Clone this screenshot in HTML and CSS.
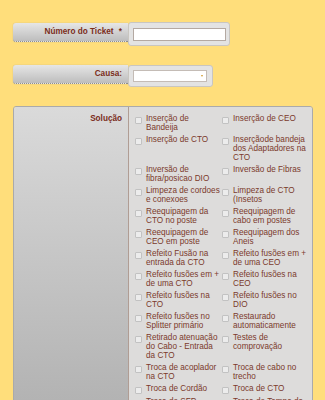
FILE: index.html
```html
<!DOCTYPE html>
<html lang="pt-br">

<head>
    <meta charset="UTF-8">
    <meta name="viewport" content="width=device-width, initial-scale=1.0">
    <title>Ticket</title>
    <link rel="stylesheet" href="styles.css">
</head>

<body>
    <div class="form">
        <div class="row rowTicket">
            <div class="label">Número do Ticket <span class="req">*</span></div>
            <div class="field fieldTicket">
                <div class="input"></div>
            </div>
        </div>
        <div class="row rowCausa">
            <div class="label">Causa:</div>
            <div class="field fieldCausa">
                <div class="select"><span class="arrow"></span></div>
            </div>
        </div>
        <div class="box">
            <div class="boxLabel">Solução</div>
            <div class="options">
                <div class="opt"><span class="check"></span><p>Inserção de Bandeija</p></div>
                <div class="opt"><span class="check"></span><p>Inserção de CEO</p></div>
                <div class="opt"><span class="check"></span><p>Inserção de CTO</p></div>
                <div class="opt"><span class="check"></span><p>Inserçãode bandeja dos Adaptadores na CTO</p></div>
                <div class="opt"><span class="check"></span><p>Inversão de fibra/posicao DIO</p></div>
                <div class="opt"><span class="check"></span><p>Inversão de Fibras</p></div>
                <div class="opt"><span class="check"></span><p>Limpeza de cordoes e conexoes</p></div>
                <div class="opt"><span class="check"></span><p>Limpeza de CTO (Insetos</p></div>
                <div class="opt"><span class="check"></span><p>Reequipagem da CTO no poste</p></div>
                <div class="opt"><span class="check"></span><p>Reequipagem de cabo em postes</p></div>
                <div class="opt"><span class="check"></span><p>Reequipagem de CEO em poste</p></div>
                <div class="opt"><span class="check"></span><p>Reequipagem dos Aneis</p></div>
                <div class="opt"><span class="check"></span><p>Refeito Fusão na entrada da CTO</p></div>
                <div class="opt"><span class="check"></span><p>Refeito fusões em + de uma CEO</p></div>
                <div class="opt"><span class="check"></span><p>Refeito fusões em + de uma CTO</p></div>
                <div class="opt"><span class="check"></span><p>Refeito fusões na CEO</p></div>
                <div class="opt"><span class="check"></span><p>Refeito fusões na CTO</p></div>
                <div class="opt"><span class="check"></span><p>Refeito fusões no DIO</p></div>
                <div class="opt"><span class="check"></span><p>Refeito fusões no Splitter primário</p></div>
                <div class="opt"><span class="check"></span><p>Restaurado automaticamente</p></div>
                <div class="opt"><span class="check"></span><p>Retirado atenuação do Cabo - Entrada da CTO</p></div>
                <div class="opt"><span class="check"></span><p>Testes de comprovação</p></div>
                <div class="opt"><span class="check"></span><p>Troca de acoplador na CTO</p></div>
                <div class="opt"><span class="check"></span><p>Troca de cabo no trecho</p></div>
                <div class="opt"><span class="check"></span><p>Troca de Cordão</p></div>
                <div class="opt"><span class="check"></span><p>Troca de CTO</p></div>
                <div class="opt"><span class="check"></span><p>Troca de SFP</p></div>
                <div class="opt"><span class="check"></span><p>Troca de Tampa da CTO</p></div>
            </div>
        </div>
    </div>
</body>

</html>
```

FILE: styles.css
```css
* {
    margin: 0;
    padding: 0;
    box-sizing: border-box;
}

body {
    background-color: #ffde7b;
    font-family: "Liberation Sans", Arial, sans-serif;
    overflow: hidden;
}

.form {
    padding: 22px 0 0 13px;
}

.row {
    display: flex;
    align-items: flex-start;
    margin-bottom: 19px;
}

.label {
    width: 115px;
    height: 19px;
    margin-top: 1px;
    padding-right: 6px;
    line-height: 18px;
    text-align: right;
    font-size: 8.2px;
    font-weight: bold;
    color: #7a2c1a;
    background: linear-gradient(#e6e6e6, #bdbdbd);
    border-radius: 3px 0 0 3px;
    border-bottom: 1px dotted #8f8f8f;
    box-shadow: 0 0 1px #a09a90;
}

.rowCausa .label {
    margin-top: 0;
}

.req {
    margin-left: 3px;
}

.field {
    background-color: #e3e3e3;
    border: 1px solid #c9c6c0;
    border-radius: 3px;
}

.fieldTicket {
    width: 102px;
    height: 24px;
    padding: 5px 0 0 4px;
}

.fieldCausa {
    width: 85px;
    height: 22px;
    padding: 4px 0 0 4px;
}

.input {
    width: 93px;
    height: 13px;
    background-color: #fff;
    border: 1px solid #b4a9a2;
}

.select {
    position: relative;
    width: 74px;
    height: 12px;
    background-color: #fff;
    border: 1px solid #c4bcb6;
}

.select .arrow {
    position: absolute;
    right: 3px;
    top: 4px;
    border-left: 1.5px solid transparent;
    border-right: 1.5px solid transparent;
    border-top: 2px solid #d29a2c;
}

.box {
    display: flex;
    width: 300px;
    height: 340px;
    border: 1px solid #aaa;
    border-radius: 3px 3px 0 0;
    overflow: hidden;
}

.boxLabel {
    width: 114px;
    padding: 7px 6px 0 0;
    text-align: right;
    font-size: 8.2px;
    font-weight: bold;
    color: #7a2c1a;
    background: linear-gradient(#dadada, #adadad);
}

.options {
    flex: 1;
    display: grid;
    grid-template-columns: 87px 1fr;
    row-gap: 3px;
    align-content: start;
    padding: 7px 0 0 6px;
    background-color: #dddcdb;
    border-left: 1px solid #b09d94;
}

.opt {
    display: flex;
    align-items: flex-start;
}

.opt p {
    font-size: 8.2px;
    line-height: 9px;
    color: #7b3a2b;
    padding-right: 2px;
}

.check {
    flex: none;
    width: 7px;
    height: 7px;
    margin: 3px 4px 0 0;
    background-color: #ececec;
    border: 1px solid #c2c2c2;
    border-radius: 1px;
}
```
